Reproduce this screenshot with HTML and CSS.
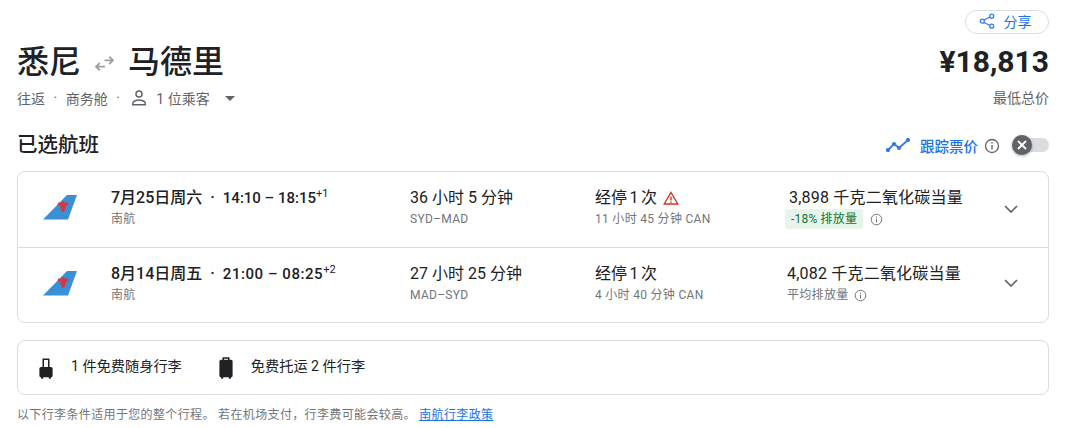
FILE: index.html
```html
<!DOCTYPE html>
<html lang="zh">
<head>
<meta charset="utf-8">
<title>悉尼 马德里</title>
<link rel="stylesheet" href="styles.css">
</head>
<body>
<main class="page">
  <div class="share-row">
    <button class="share">
      <svg class="share-icon" viewBox="0 0 16 16"><path d="M11 4 5 7M5 9.500l6 3"/><circle cx="12.700" cy="3.200" r="2"/><circle cx="3.300" cy="8.200" r="2"/><circle cx="12.700" cy="13.200" r="2"/></svg>
      <span>分享</span>
    </button>
  </div>
  <header class="head">
    <div class="head-left">
      <h1 class="route">
        <span>悉尼</span>
        <svg class="swap" viewBox="0 0 20 16"><path d="M10 5h8M14.500 1.500 18 5l-3.500 3.500M10.500 11H2M5.500 7.500 2 11l3.500 3.500"/></svg>
        <span>马德里</span>
      </h1>
      <div class="meta">
        <span>往返</span><span class="dot">·</span><span>商务舱</span><span class="dot">·</span>
        <svg class="person" viewBox="0 0 16 16"><circle cx="8" cy="4.500" r="2.700"/><path d="M2.500 14v-1.500c0-1.800 3.500-2.800 5.500-2.800s5.500 1 5.500 2.800V14z"/></svg>
        <span class="pax">1 位乘客</span>
        <span class="caret"></span>
      </div>
    </div>
    <div class="head-right">
      <div class="price">¥18,813</div>
      <div class="price-label">最低总价</div>
    </div>
  </header>
  <div class="section-row">
    <h2 class="section-title">已选航班</h2>
    <div class="track">
      <svg class="trend" viewBox="0 0 24 14"><path d="M2 12l6-6 5 4 9-8"/><circle cx="2" cy="12" r="1.200"/><circle cx="8" cy="6" r="1.200"/><circle cx="13" cy="10" r="1.200"/><circle cx="22" cy="2" r="1.200"/></svg>
      <span class="track-label">跟踪票价</span>
      <svg class="info info-track" viewBox="0 0 16 16"><circle cx="8" cy="8" r="6.500"/><path d="M8 7v4.500M8 4.300v1.500"/></svg>
      <div class="toggle">
        <div class="knob"><svg viewBox="0 0 12 12"><path d="M2 2l8 8M10 2l-8 8"/></svg></div>
      </div>
    </div>
  </div>
  <section class="flights">
    <article class="flight">
      <svg class="tail" viewBox="0 0 34 25"><path class="tail-blue" d="M24 0H34L25 24.500H0z"/><path class="tail-red" d="M20 6c.9 0 1.500.8 1.600 1.800l3.400-.3.300 2.700-2.500.4-.6 3.900-1.400 2.500h-1.600l-1.400-2.500-.6-3.900-2.500-.4.300-2.700 3.400.3c.1-1 .7-1.800 1.600-1.800z"/></svg>
      <div class="col col-time">
        <div class="main medium"><span>7月25日周六</span><span class="sep">·</span><span class="time">14:10 – 18:15</span><sup>+1</sup></div>
        <div class="sub">南航</div>
      </div>
      <div class="col col-dur">
        <div class="main">36 小时 5 分钟</div>
        <div class="sub">SYD–MAD</div>
      </div>
      <div class="col col-stop">
        <div class="main stop">经停 1 次
          <svg class="warn" viewBox="0 0 16 14"><path d="M8 1.500 14.800 13H1.200z"/><path d="M8 5.500v4M8 10.500v1.200"/></svg>
        </div>
        <div class="sub">11 小时 45 分钟 CAN</div>
      </div>
      <div class="col col-co2 col-co2-a">
        <div class="main co2">3,898 千克二氧化碳当量</div>
        <div class="sub sub-co2"><span class="badge">-18% 排放量</span>
          <svg class="info info-sm" viewBox="0 0 16 16"><circle cx="8" cy="8" r="6.500"/><path d="M8 7v4.500M8 4.300v1.500"/></svg>
        </div>
      </div>
      <svg class="chev" viewBox="0 0 14 8"><path d="M1 1l6 6 6-6"/></svg>
    </article>
    <article class="flight">
      <svg class="tail" viewBox="0 0 34 25"><path class="tail-blue" d="M24 0H34L25 24.500H0z"/><path class="tail-red" d="M20 6c.9 0 1.500.8 1.600 1.800l3.400-.3.300 2.700-2.500.4-.6 3.900-1.400 2.500h-1.600l-1.400-2.500-.6-3.900-2.500-.4.300-2.700 3.400.3c.1-1 .7-1.800 1.600-1.800z"/></svg>
      <div class="col col-time">
        <div class="main medium"><span>8月14日周五</span><span class="sep">·</span><span class="time time-wide">21:00 – 08:25</span><sup>+2</sup></div>
        <div class="sub">南航</div>
      </div>
      <div class="col col-dur">
        <div class="main">27 小时 25 分钟</div>
        <div class="sub">MAD–SYD</div>
      </div>
      <div class="col col-stop">
        <div class="main stop">经停 1 次</div>
        <div class="sub">4 小时 40 分钟 CAN</div>
      </div>
      <div class="col col-co2 col-co2-b">
        <div class="main co2">4,082 千克二氧化碳当量</div>
        <div class="sub sub-co2">平均排放量
          <svg class="info info-sm" viewBox="0 0 16 16"><circle cx="8" cy="8" r="6.500"/><path d="M8 7v4.500M8 4.300v1.500"/></svg>
        </div>
      </div>
      <svg class="chev" viewBox="0 0 14 8"><path d="M1 1l6 6 6-6"/></svg>
    </article>
  </section>
  <section class="bags">
    <div class="bag">
      <svg class="bag-icon" viewBox="0 0 14 20"><path d="M4.500 9V2h5v7" class="bag-handle"/><rect x="1" y="9" width="12" height="9.500" rx="1.500"/><rect x="2.500" y="18" width="2" height="1.700"/><rect x="9.500" y="18" width="2" height="1.700"/></svg>
      <span>1 件免费随身行李</span>
    </div>
    <div class="bag">
      <svg class="bag-icon" viewBox="0 0 14 20"><path d="M4.500 3V1h5v2" class="bag-handle"/><rect x="1" y="2.500" width="12" height="16" rx="1.500"/><rect x="2.500" y="18" width="2" height="1.700"/><rect x="9.500" y="18" width="2" height="1.700"/></svg>
      <span>免费托运 2 件行李</span>
    </div>
  </section>
  <p class="note">以下行李条件适用于您的整个行程。 若在机场支付，行李费可能会较高。 <a href="#">南航行李政策</a></p>
</main>
</body>
</html>
```
FILE: styles.css
```css
* { box-sizing: border-box; }
html, body { margin: 0; padding: 0; background: #fff; }
body {
  font-family: Roboto, "Noto Sans CJK SC", sans-serif;
  color: #202124;
  height: 428px;
  overflow: hidden;
}
.page { width: 1032px; margin-left: 17px; padding-top: 10px; }
.share-row { display: flex; justify-content: flex-end; height: 24px; }
.share {
  width: 84px; height: 24px;
  border: 1px solid #dadce0; border-radius: 12px;
  background: #fff; color: #1a73e8;
  font: 14px Roboto, "Noto Sans CJK SC", sans-serif;
  display: flex; align-items: center; justify-content: center; gap: 9px;
  padding: 0 4px 2px 0;
}
.share-icon { width: 16px; height: 16px; fill: #fff; stroke: #3b78e7; stroke-width: 1.300; }
.head { display: flex; justify-content: space-between; margin-top: 5px; }
.route {
  margin: 0; font-size: 32px; font-weight: 500; line-height: 46px;
  display: flex; align-items: center; gap: 13px;
}
.swap { width: 21px; height: 17px; fill: none; stroke: #9aa0a6; stroke-width: 1.800; margin-top: 2px; }
.meta { display: flex; align-items: center; font-size: 14px; color: #5f6368; height: 20px; margin-top: 3px; }
.dot { margin: 0 8.500px; }
.person { width: 18px; height: 18px; fill: none; stroke: #5f6368; stroke-width: 1.300; margin: 0 8px 0 2px; }
.caret { width: 0; height: 0; border: 5px solid transparent; border-top-color: #5f6368; border-bottom-width: 0; margin-left: 15px; }
.head-right { text-align: right; }
.price { font-size: 30px; font-weight: 700; line-height: 46px; }
.price-label { font-size: 14px; color: #5f6368; line-height: 20px; margin-top: 3px; }
.section-row { display: flex; justify-content: space-between; align-items: center; margin-top: 22px; height: 30px; }
.section-title { margin: 0; font-size: 20.500px; font-weight: 500; line-height: 30px; }
.track { display: flex; align-items: center; }
.trend { width: 24px; height: 14px; fill: #3b78e7; stroke: #3b78e7; stroke-width: 1.800; margin-right: 10px; }
.trend path { fill: none; }
.track-label { font-size: 14.500px; font-weight: 500; color: #1a73e8; }
.info { fill: none; stroke: #5f6368; stroke-width: 1.300; }
.info-track { width: 16px; height: 16px; margin: 2px 13px 0 6px; }
.toggle { width: 36px; height: 14px; border-radius: 7px; background: #dadce0; position: relative; }
.knob {
  position: absolute; left: -1px; top: -3px; width: 20px; height: 20px; border-radius: 50%;
  background: #5f6368; box-shadow: 0 1px 3px rgba(60,64,67,.45);
  display: flex; align-items: center; justify-content: center;
}
.knob svg { width: 12px; height: 12px; fill: none; stroke: #fff; stroke-width: 1.800; }
.flights { border: 1px solid #dadce0; border-radius: 8px; margin-top: 11px; height: 152px; }
.flight { height: 75px; display: flex; position: relative; align-items: flex-start; padding-top: 15px; }
.flight + .flight { border-top: 1px solid #dadce0; height: 76px; }
.tail { width: 34px; height: 25px; margin: 8px 0 0 25px; flex: none; }
.tail-blue { fill: #3b8fd4; }
.tail-red { fill: #d9363e; }
.col { flex: none; }
.col-time { width: 299px; margin-left: 34px; }
.col-dur { width: 185px; }
.col-stop { width: 190px; }
.col-co2 { width: 190px; }
.col-co2-a .main { padding-left: 4px; }
.col-co2-b { padding-left: 2px; }
.main { font-size: 16px; line-height: 22px; white-space: nowrap; display: flex; align-items: center; }
.co2 { letter-spacing: .2px; }
.stop { word-spacing: -1.500px; }
.medium { font-weight: 500; }
.sep { margin: 0 8px; }
.time { font-size: 15px; }
.time-wide { letter-spacing: .55px; }
sup { font-size: 11px; font-weight: 400; line-height: 1; align-self: flex-start; margin-top: 1px; }
.sub { font-size: 12px; line-height: 18px; color: #70757a; letter-spacing: .3px; white-space: nowrap; margin-top: 1px; }
.col-co2-a .sub { margin-top: 0; }
.sub-co2 { display: flex; align-items: center; }
.badge { background: #e6f4ea; color: #137333; border-radius: 3px; padding: 0 6px; height: 20px; line-height: 20px; font-size: 12px; letter-spacing: .2px; }
.info-sm { width: 13px; height: 13px; margin-left: 5px; stroke-width: 1.100; }
.col-co2-a .info-sm { margin-left: 7px; }
.warn { width: 16px; height: 14px; fill: none; stroke: #d93025; stroke-width: 1.400; margin-left: 6px; }
.chev { width: 14px; height: 8px; fill: none; stroke: #5f6368; stroke-width: 1.700; position: absolute; right: 30px; top: 33px; }
.flight + .flight .chev { top: 31px; }
.bags {
  border: 1px solid #dadce0; border-radius: 8px; margin-top: 17px; height: 55px;
  display: flex; align-items: center; padding-left: 20px; gap: 36px;
  font-size: 14.200px; padding-bottom: 5px;
}
.bag { display: flex; align-items: center; gap: 17px; }
.bag-icon { width: 16px; height: 22px; fill: #202124; margin-top: 5px; }
.bag-handle { fill: none; stroke: #202124; stroke-width: 1.400; }
.note { margin: 11px 0 0; font-size: 12px; line-height: 18px; color: #70757a; letter-spacing: .36px; }
.note a { color: #1a73e8; }
```
